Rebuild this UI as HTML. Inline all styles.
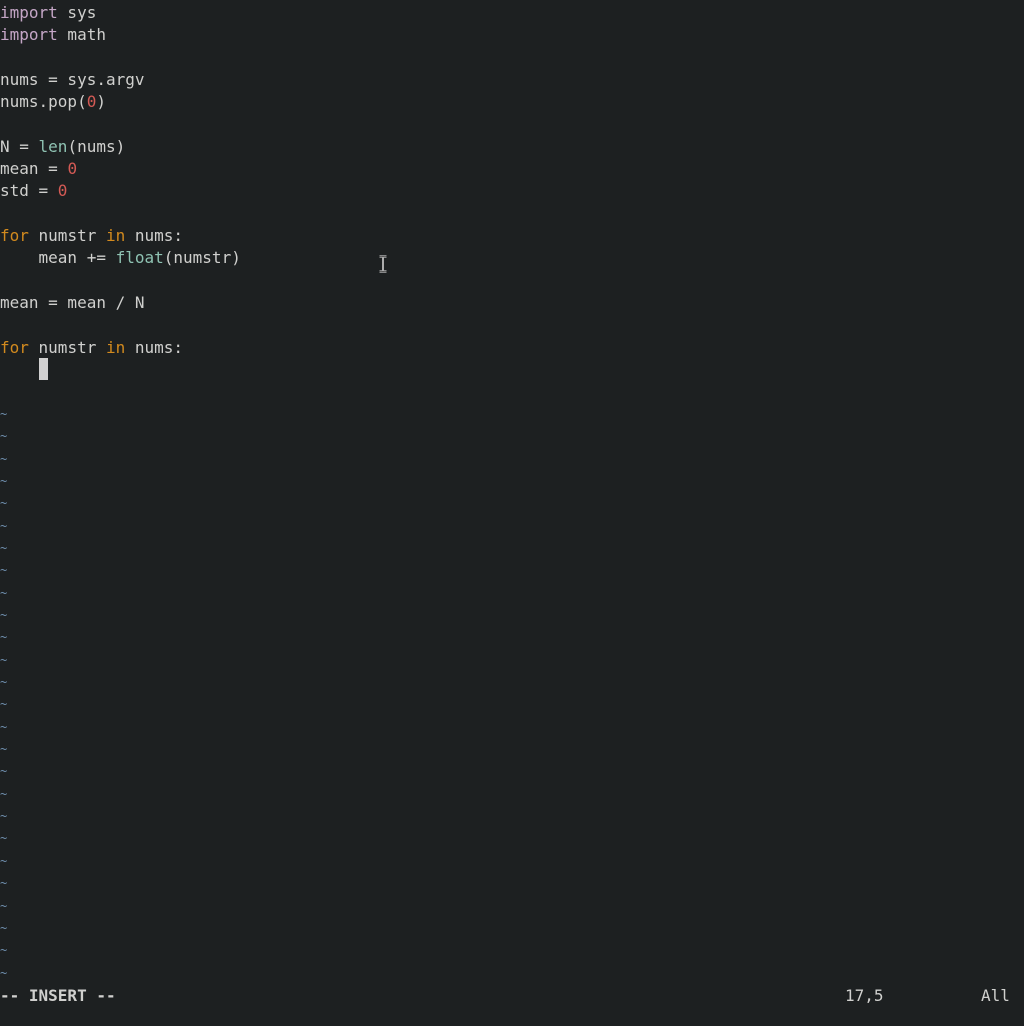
<!DOCTYPE html>
<html><head><meta charset="utf-8"><style>
html,body{margin:0;padding:0;background:#1d2021;width:1024px;height:1026px;overflow:hidden}
.l{position:absolute;left:0;height:22px;line-height:22px;font-family:"DejaVu Sans Mono","Liberation Mono",monospace;font-size:16px;color:#d0d0ce;white-space:pre}
.k{color:#c4a6c6}.o{color:#d28a1e}.f{color:#8fc3b3}.n{color:#d45a55}.t{color:#6f8fae;font-size:12px}
b{font-weight:bold}
</style></head><body>
<div class="l" style="top:1.5px"><span class="k">import</span> sys</div>
<div class="l" style="top:23.85px"><span class="k">import</span> math</div>
<div class="l" style="top:68.55px">nums = sys.argv</div>
<div class="l" style="top:90.9px">nums.pop(<span class="n">0</span>)</div>
<div class="l" style="top:135.6px">N = <span class="f">len</span>(nums)</div>
<div class="l" style="top:157.95px">mean = <span class="n">0</span></div>
<div class="l" style="top:180.3px">std = <span class="n">0</span></div>
<div class="l" style="top:225px"><span class="o">for</span> numstr <span class="o">in</span> nums:</div>
<div class="l" style="top:247.35px">    mean += <span class="f">float</span>(numstr)</div>
<div class="l" style="top:292.05px">mean = mean / N</div>
<div class="l" style="top:336.75px"><span class="o">for</span> numstr <span class="o">in</span> nums:</div>
<div style="position:absolute;left:39px;top:358px;width:9px;height:22px;background:#d0d0d0"></div>
<div id="tl"></div>
<div class="l" style="top:984.5px"><b>-- INSERT --</b></div>
<div class="l" style="top:984.5px;left:845px">17,5</div>
<div class="l" style="top:984.5px;left:981px">All</div>
<svg style="position:absolute;left:378px;top:255px" width="10" height="18" viewBox="0 0 10 18"><path d="M1.5 1.5h7M5 1.5v15M1.5 16.5h7" stroke="#eee" stroke-width="2" fill="none"/><path d="M1.5 1.5h7M5 1.5v15M1.5 16.5h7" stroke="#333" stroke-width="0.7" fill="none"/></svg>
<script>
var h='';for(var i=18;i<=43;i++){h+='<div class="l t" style="top:'+(0.5+i*22.35)+'px">~</div>';}
document.getElementById('tl').innerHTML=h;
</script>
</body></html>
